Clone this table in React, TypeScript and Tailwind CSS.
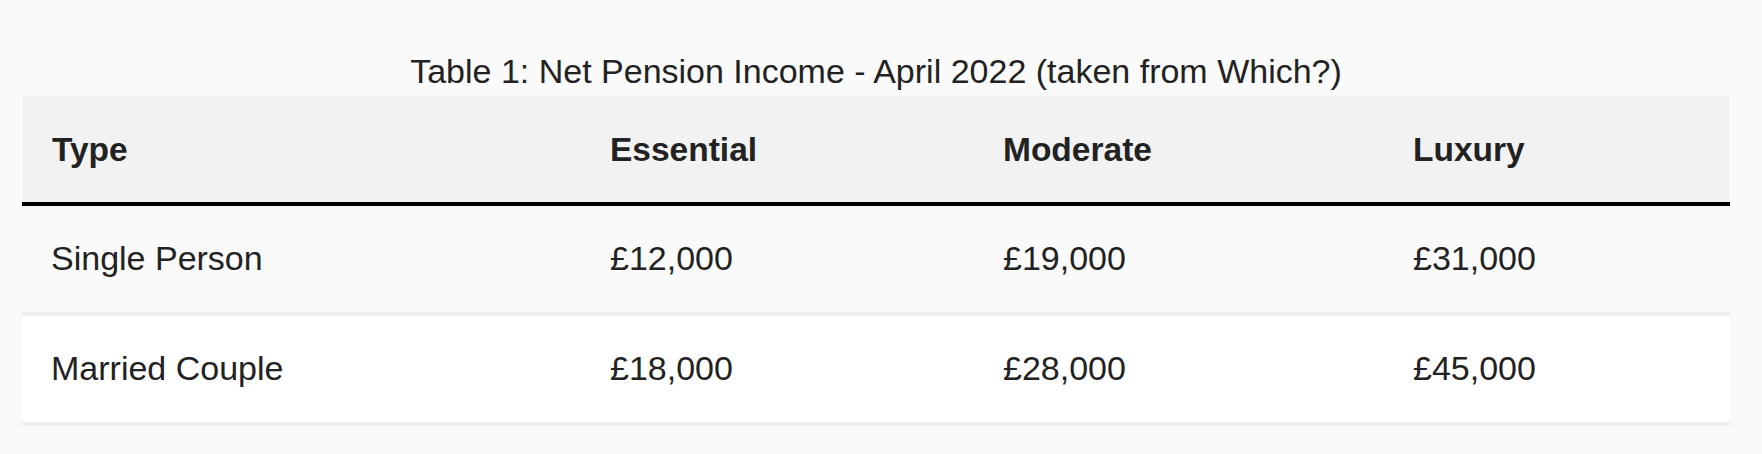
import React from "react";

const rows = [
  ["Single Person", "£12,000", "£19,000", "£31,000"],
  ["Married Couple", "£18,000", "£28,000", "£45,000"],
];

export default function App() {
  return (
    <div className="min-h-screen bg-[#fafafa] pl-[22px] pr-[32px] pt-[51px] font-['Liberation_Sans',Arial,Helvetica,sans-serif] text-[#222222]">
      <div className="w-[1708px]">
        <div className="mb-[5px] h-[40px] text-center text-[34px] leading-[40px]">
          Table 1: Net Pension Income - April 2022 (taken from Which?)
        </div>
        <div className="grid h-[110px] grid-cols-[558px_393px_410px_347px] items-center border-b-4 border-black bg-[#f2f2f2] text-[33.5px] font-bold">
          <div className="px-[30px] pt-[2px]">Type</div>
          <div className="px-[30px] pt-[2px]">Essential</div>
          <div className="px-[30px] pt-[2px]">Moderate</div>
          <div className="px-[30px] pt-[2px]">Luxury</div>
        </div>
        {rows.map((r, i) => (
          <div
            key={i}
            className={
              i === 0
                ? "grid h-[110px] grid-cols-[558px_393px_410px_347px] items-center border-b-4 border-[#eeeeee] bg-[#fafafa] text-[34px]"
                : "grid h-[110px] grid-cols-[558px_393px_410px_347px] items-center border-b-4 border-[#eeeeee] bg-white text-[34px]"
            }
          >
            {r.map((c, j) => (
              <div key={j} className={j === 0 ? "px-[29px] pb-[2px]" : "px-[30px] pb-[2px]"}>
                {c}
              </div>
            ))}
          </div>
        ))}
      </div>
    </div>
  );
}
